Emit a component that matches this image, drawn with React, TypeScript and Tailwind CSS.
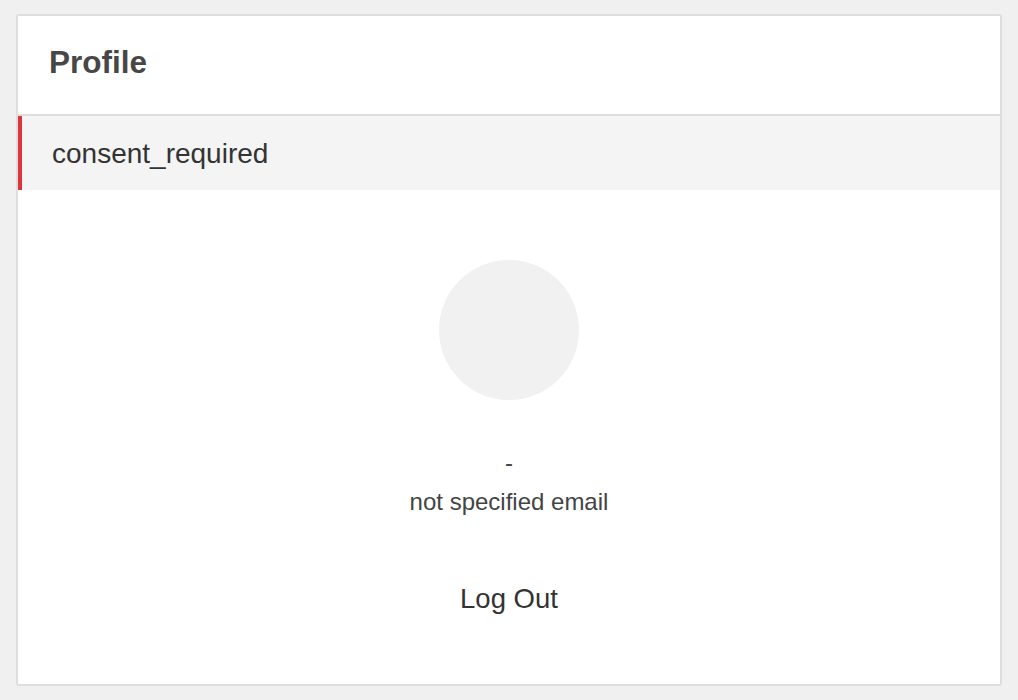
export default function App() {
  return (
    <div className="min-h-[700px] bg-[#f0f0f0] pt-[14px] pl-[16px] pr-[16px] pb-[14px] font-['Liberation_Sans',Arial,sans-serif]">
      <div className="bg-white border-2 border-[#dedede] rounded-[3px] h-[672px] flex flex-col">
        <div className="h-[100px] flex items-center pl-[31px] pb-[4px] border-b-2 border-[#dedede]">
          <h1 className="text-[31.5px] font-bold text-[#474747] leading-none">Profile</h1>
        </div>
        <div className="h-[74px] bg-[#f4f4f4] border-l-4 border-[#dc3540] flex items-center pl-[30px] pt-[2px]">
          <span className="text-[28px] text-[#333] leading-none">consent_required</span>
        </div>
        <div className="flex flex-col items-center pt-[70px]">
          <div className="w-[140px] h-[140px] rounded-full bg-[#f1f1f1]" />
          <div className="mt-[44px] text-[24px] leading-[38px] text-[#444] text-center">
            <div>-</div>
            <div className="mt-[1px]">not specified email</div>
          </div>
          <button className="mt-[64px] text-[27.5px] text-[#333] leading-none">Log Out</button>
        </div>
      </div>
    </div>
  );
}
